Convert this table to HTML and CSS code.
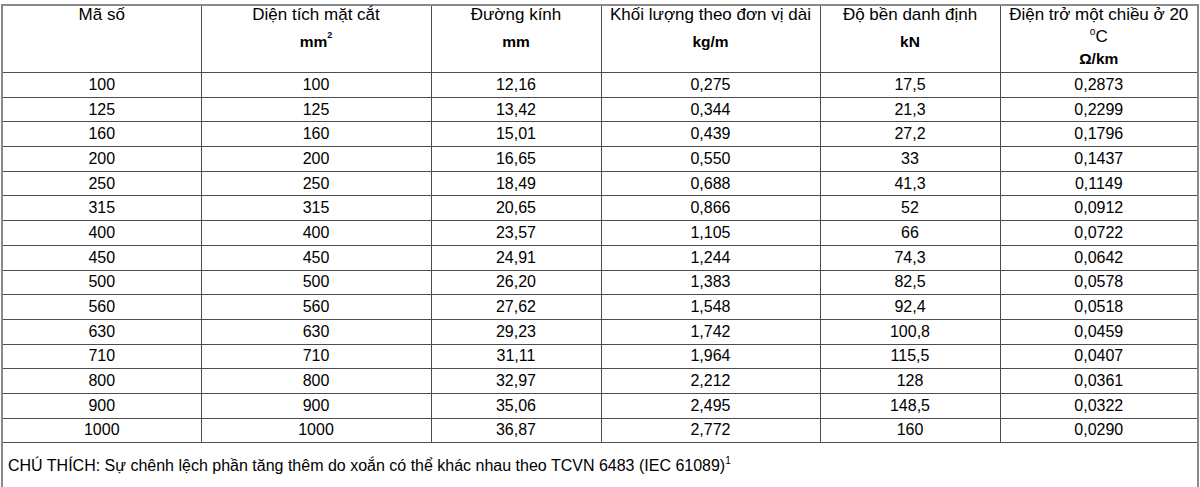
FILE: index.html
```html
<!DOCTYPE html>
<html lang="vi">
<head>
<meta charset="utf-8">
<title>Bảng thông số dây dẫn</title>
<link rel="stylesheet" href="styles.css">
</head>
<body>
<table class="spec">
  <colgroup>
    <col class="c1"><col class="c2"><col class="c3"><col class="c4"><col class="c5"><col class="c6">
  </colgroup>
  <thead>
    <tr class="head">
      <th><div class="label">Mã số</div></th>
      <th><div class="label">Diện tích mặt cắt</div><div class="unit">mm<sup class="sup">2</sup></div></th>
      <th><div class="label">Đường kính</div><div class="unit">mm</div></th>
      <th><div class="label">Khối lượng theo đơn vị dài</div><div class="unit">kg/m</div></th>
      <th><div class="label">Độ bền danh định</div><div class="unit">kN</div></th>
      <th><div class="label">Điện trở một chiều ở 20</div><div class="label temp"><sup class="deg">o</sup>C</div><div class="unit unit-tight">Ω/km</div></th>
    </tr>
  </thead>
  <tbody>
    <tr><td>100</td><td>100</td><td>12,16</td><td>0,275</td><td>17,5</td><td>0,2873</td></tr>
    <tr><td>125</td><td>125</td><td>13,42</td><td>0,344</td><td>21,3</td><td>0,2299</td></tr>
    <tr><td>160</td><td>160</td><td>15,01</td><td>0,439</td><td>27,2</td><td>0,1796</td></tr>
    <tr><td>200</td><td>200</td><td>16,65</td><td>0,550</td><td>33</td><td>0,1437</td></tr>
    <tr><td>250</td><td>250</td><td>18,49</td><td>0,688</td><td>41,3</td><td>0,1149</td></tr>
    <tr><td>315</td><td>315</td><td>20,65</td><td>0,866</td><td>52</td><td>0,0912</td></tr>
    <tr><td>400</td><td>400</td><td>23,57</td><td>1,105</td><td>66</td><td>0,0722</td></tr>
    <tr><td>450</td><td>450</td><td>24,91</td><td>1,244</td><td>74,3</td><td>0,0642</td></tr>
    <tr><td>500</td><td>500</td><td>26,20</td><td>1,383</td><td>82,5</td><td>0,0578</td></tr>
    <tr><td>560</td><td>560</td><td>27,62</td><td>1,548</td><td>92,4</td><td>0,0518</td></tr>
    <tr><td>630</td><td>630</td><td>29,23</td><td>1,742</td><td>100,8</td><td>0,0459</td></tr>
    <tr><td>710</td><td>710</td><td>31,11</td><td>1,964</td><td>115,5</td><td>0,0407</td></tr>
    <tr><td>800</td><td>800</td><td>32,97</td><td>2,212</td><td>128</td><td>0,0361</td></tr>
    <tr><td>900</td><td>900</td><td>35,06</td><td>2,495</td><td>148,5</td><td>0,0322</td></tr>
    <tr><td>1000</td><td>1000</td><td>36,87</td><td>2,772</td><td>160</td><td>0,0290</td></tr>
  </tbody>
  <tfoot>
    <tr class="note">
      <td colspan="6">CHÚ THÍCH: Sự chênh lệch phần tăng thêm do xoắn có thể khác nhau theo TCVN 6483 (IEC 61089)<sup class="fn">1</sup></td>
    </tr>
  </tfoot>
</table>
</body>
</html>
```

FILE: styles.css
```css
html, body {
  margin: 0;
  background: #ffffff;
}

body {
  padding: 4px 3px 0 1px;
  font-family: "Liberation Sans", Arial, sans-serif;
  font-size: 16px;
  color: #000;
}

.spec {
  width: 1196px;
  table-layout: fixed;
  border-collapse: collapse;
  border: 2px solid #8a8a8a;
}

.c1 { width: 199px; }
.c2 { width: 230px; }
.c3 { width: 170px; }
.c4 { width: 219px; }
.c5 { width: 180px; }
.c6 { width: 198px; }

.spec th,
.spec td {
  border: 1px solid #4d4d4d;
  padding: 0 3px;
  text-align: center;
}

.head th {
  height: 66px;
  vertical-align: top;
  font-weight: normal;
  padding-top: 0;
  padding-bottom: 0;
}

.label {
  font-size: 17px;
  line-height: 18px;
  margin-top: 0;
}

.temp {
  margin-top: 4px;
}

.unit {
  font-weight: bold;
  font-size: 15.5px;
  line-height: 19px;
  margin-top: 8px;
}

.unit-tight {
  margin-top: 3px;
}

.sup {
  font-size: 9px;
  vertical-align: 9px;
  line-height: 0;
}

.deg {
  font-size: 10px;
  vertical-align: 7px;
  line-height: 0;
}

.spec tbody td {
  height: 23.7px;
  line-height: 18px;
  padding-top: 0;
  padding-bottom: 0;
  vertical-align: middle;
}

.note td {
  text-align: left;
  height: 42px;
  padding: 2px 5px 0;
  vertical-align: middle;
  border-right-color: #8a8a8a;
}

.fn {
  font-size: 10px;
  vertical-align: 7px;
  line-height: 0;
}
```
